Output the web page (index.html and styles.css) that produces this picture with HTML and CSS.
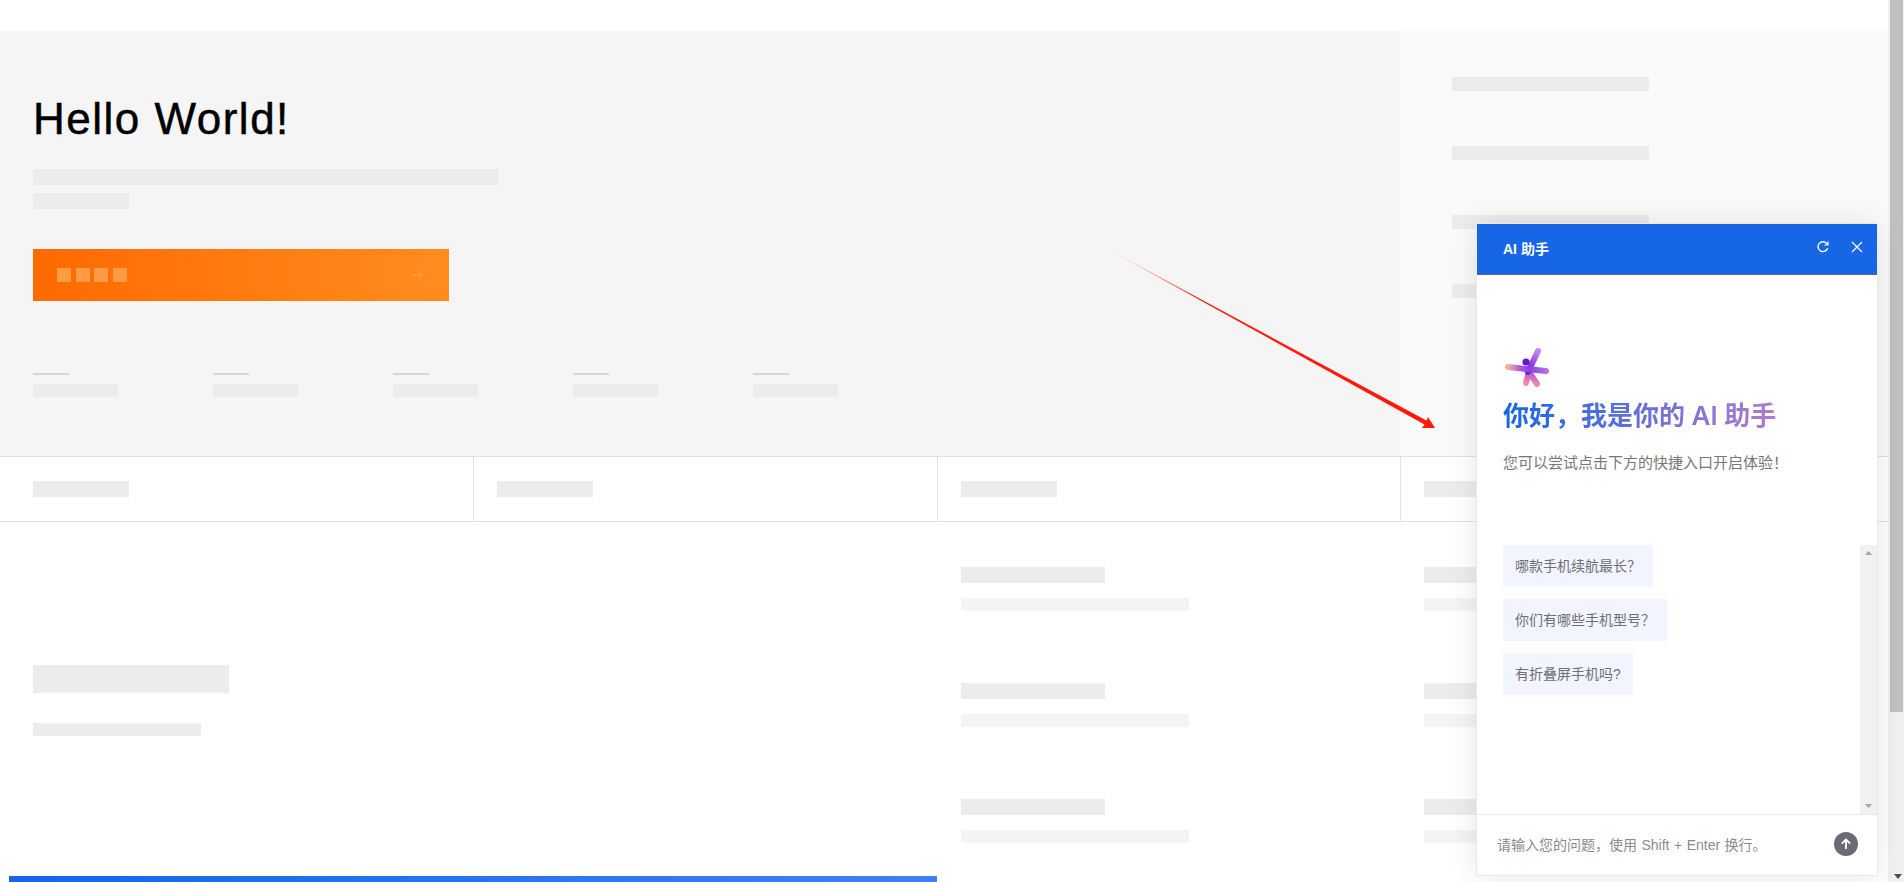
FILE: index.html
```html
<!DOCTYPE html>
<html lang="zh-CN">
<head>
<meta charset="utf-8">
<title>AI 助手</title>
<link rel="stylesheet" href="styles.css">
</head>
<body>
<div class="viewport">
  <main class="page">
    <section class="hero">
      <div class="hero-main">
        <h1 class="hello">Hello World!</h1>
        <div class="sk sk-lead"></div>
        <div class="sk sk-lead-short"></div>
        <div class="cta">
          <div class="cta-dots"><i></i><i></i><i></i><i></i></div>
          <svg class="cta-arrow" viewBox="0 0 12 10" width="12" height="10" fill="none" stroke="#ff9c45" stroke-width="1.3"><path d="M0.5 5H11M7 1l4 4-4 4"/></svg>
        </div>
        <div class="stats">
          <div class="stat"><div class="stat-tick"></div><div class="sk stat-val"></div></div>
          <div class="stat"><div class="stat-tick"></div><div class="sk stat-val"></div></div>
          <div class="stat"><div class="stat-tick"></div><div class="sk stat-val"></div></div>
          <div class="stat"><div class="stat-tick"></div><div class="sk stat-val"></div></div>
          <div class="stat"><div class="stat-tick"></div><div class="sk stat-val"></div></div>
        </div>
      </div>
      <div class="hero-side">
        <div class="sk side-bar"></div>
        <div class="sk side-bar"></div>
        <div class="sk side-bar"></div>
        <div class="sk side-bar"></div>
      </div>
    </section>
    <nav class="tabs">
      <div class="tab"><div class="sk tab-sk"></div></div>
      <div class="tab"><div class="sk tab-sk"></div></div>
      <div class="tab"><div class="sk tab-sk"></div></div>
      <div class="tab"><div class="sk tab-sk"></div></div>
    </nav>
    <section class="lower">
      <div class="feature">
        <div class="sk feature-title"></div>
        <div class="sk feature-sub"></div>
        <div class="feature-bar"></div>
      </div>
      <div class="list">
        <div class="item"><div class="sk item-a"></div><div class="item-b"></div></div>
        <div class="item"><div class="sk item-a"></div><div class="item-b"></div></div>
        <div class="item"><div class="sk item-a"></div><div class="item-b"></div></div>
      </div>
      <div class="list">
        <div class="item"><div class="sk item-a"></div><div class="item-b"></div></div>
        <div class="item"><div class="sk item-a"></div><div class="item-b"></div></div>
        <div class="item"><div class="sk item-a"></div><div class="item-b"></div></div>
      </div>
    </section>
  </main>
  <div class="page-scroll">
    <div class="page-thumb"></div>
    <div class="page-scroll-down"></div>
  </div>

  <svg class="pointer" width="340" height="190" viewBox="1110 248 340 190">
    <defs>
      <linearGradient id="fade" gradientUnits="userSpaceOnUse" x1="1113" y1="252" x2="1200" y2="299">
        <stop offset="0" stop-color="#ff1a0a" stop-opacity="0.3"/>
        <stop offset="1" stop-color="#ff1a0a"/>
      </linearGradient>
    </defs>
    <path fill="url(#fade)" d="M1113 252L1426.5 420.5L1428 417L1435 428L1422 428L1424.5 424.5Z"/>
  </svg>

  <aside class="chat">
    <header class="chat-head">
      <span class="chat-title">AI 助手</span>
      <div class="chat-actions">
        <svg class="ico-refresh" width="14" height="14" viewBox="0 0 14 14" fill="none" stroke="#fff" stroke-width="1.4"><path d="M11.6 8.2A4.9 4.9 0 1 1 10.4 3.2L11.8 4.6"/><path d="M12 1.4V5H8.4" stroke-width="1.2"/></svg>
        <svg class="ico-close" width="12" height="12" viewBox="0 0 12 12" fill="none" stroke="#fff" stroke-width="1.3"><path d="M1 1l10 10M11 1L1 11"/></svg>
      </div>
    </header>
    <div class="chat-body">
      <div class="intro">
        <svg class="logo" width="44" height="42" viewBox="0 0 44 42" fill="none" stroke-linecap="round" stroke-width="6">
          <defs>
            <linearGradient id="lg-h" gradientUnits="userSpaceOnUse" x1="3" y1="20" x2="42" y2="24">
              <stop offset="0" stop-color="#eeb99a"/>
              <stop offset="0.3" stop-color="#b05ad8"/>
              <stop offset="0.55" stop-color="#8a3fe0"/>
              <stop offset="1" stop-color="#b572e6"/>
            </linearGradient>
            <linearGradient id="lg-v" gradientUnits="userSpaceOnUse" x1="33" y1="3" x2="23" y2="24">
              <stop offset="0" stop-color="#c987f5"/>
              <stop offset="1" stop-color="#6a1fd6"/>
            </linearGradient>
            <linearGradient id="lg-l" gradientUnits="userSpaceOnUse" x1="23" y1="24" x2="21" y2="36">
              <stop offset="0" stop-color="#a855d8"/>
              <stop offset="1" stop-color="#fb86a8"/>
            </linearGradient>
          </defs>
          <path stroke="url(#lg-l)" d="M24 25L21 36"/>
          <path stroke="url(#lg-l)" d="M24 25L32 37"/>
          <path stroke="url(#lg-v)" d="M33 4L23 25"/>
          <path stroke="url(#lg-h)" d="M3 20L41 24"/>
          <circle cx="21" cy="15" r="3.6" fill="#6a14d0" stroke="none"/>
        </svg>
        <h2 class="greet"><span class="greet-text">你好，我是你的 AI 助手</span></h2>
        <p class="hint">您可以尝试点击下方的快捷入口开启体验！</p>
      </div>
      <div class="suggest">
        <div class="chips">
          <div class="chip">哪款手机续航最长？</div>
          <div class="chip">你们有哪些手机型号？</div>
          <div class="chip">有折叠屏手机吗?</div>
        </div>
        <div class="inner-scroll">
          <svg width="17" height="17" viewBox="0 0 17 17"><path d="M8.5 6L12 10H5Z" fill="#a6a6a6"/></svg>
          <svg width="17" height="17" viewBox="0 0 17 17"><path d="M8.5 11L5 7H12Z" fill="#a6a6a6"/></svg>
        </div>
      </div>
    </div>
    <footer class="composer">
      <span class="placeholder">请输入您的问题，使用 Shift + Enter 换行。</span>
      <span class="send">
        <svg width="12" height="12" viewBox="0 0 12 12" fill="none" stroke="#fff" stroke-width="1.8"><path d="M6 11V1.5M1.8 5.6L6 1.5l4.2 4.1"/></svg>
      </span>
    </footer>
  </aside>
</div>
</body>
</html>
```

FILE: styles.css
```css
* { box-sizing: border-box; }
html, body { margin: 0; height: 100%; overflow: hidden; background: #fff; }
body { font-family: "Liberation Sans", "Noto Sans CJK SC", sans-serif; }

.viewport { position: relative; display: flex; width: 1904px; height: 882px; overflow: hidden; }
.page { width: 1888px; flex: none; padding-top: 31px; }

.sk { background: #ececec; }

.hero { display: flex; height: 426px; background: #f5f5f5; border-bottom: 1px solid #e2e2e2; }
.hero-main { width: 1400px; padding: 0 33px; }
.hello { margin: 63px 0 0; height: 50px; font-size: 44px; line-height: 50px; font-weight: 400; letter-spacing: 1.5px; color: #000; -webkit-text-stroke: 0.5px #000; }
.sk-lead { width: 465px; height: 16px; margin-top: 25px; }
.sk-lead-short { width: 96px; height: 16px; margin-top: 8px; }
.cta { display: flex; align-items: center; justify-content: space-between; width: 416px; height: 52px; margin-top: 40px; padding: 0 24px; background: linear-gradient(90deg, #ff6a00, #ff8c1f); }
.cta-dots { display: flex; gap: 4.67px; }
.cta-dots i { display: block; width: 14px; height: 14px; background: #ff9a45; }
.cta-arrow { margin-right: 2px; }
.stats { display: flex; margin-top: 72px; }
.stat { width: 180px; }
.stat-tick { width: 36px; height: 2px; background: #d5d5dd; }
.stat-val { width: 85px; height: 13px; margin-top: 9px; }
.hero-side { flex: 1; padding: 46px 0 0 52px; background: #fafafa; display: flex; flex-direction: column; gap: 55px; }
.side-bar { width: 197px; height: 14px; }

.tabs { display: grid; grid-template-columns: 473px 464px 463px 1fr; height: 65px; border-bottom: 1px solid #e2e2e2; }
.tab { padding: 24px 0 0 23px; border-left: 1px solid #e2e2e2; }
.tab:first-child { padding-left: 33px; border-left: 0; }
.tab-sk { width: 96px; height: 16px; }

.lower { display: grid; grid-template-columns: 937px 463px 1fr; height: 360px; }
.feature { position: relative; padding: 143px 0 0 33px; }
.feature-title { width: 196px; height: 28px; }
.feature-sub { width: 168px; height: 13px; margin-top: 30px; }
.feature-bar { position: absolute; left: 9px; right: 0; bottom: 0; height: 6px; background: linear-gradient(90deg, #1666e6, #3b82f6); }
.list { padding: 45px 0 0 24px; display: flex; flex-direction: column; gap: 72px; }
.item-a { width: 144px; height: 16px; }
.item-b { width: 228px; height: 13px; margin-top: 15px; background: #f4f4f4; }

.page-scroll { position: relative; flex: 1; background: #f1f1f1; }
.page-thumb { position: absolute; left: 2px; right: 1px; top: 0; height: 712px; background: #c1c1c1; }
.page-scroll-down { position: absolute; left: 6px; bottom: 3px; border: 4px solid transparent; border-top: 5px solid #505050; border-bottom: 0; }

.pointer { position: absolute; left: 1110px; top: 248px; }

.chat { position: absolute; left: 1476px; top: 223px; width: 402px; height: 653px; display: flex; flex-direction: column; background: #fff; border: 1px solid #e9e9f0; box-shadow: 0 0 28px rgba(0, 0, 0, 0.1); }
.chat-head { display: flex; align-items: center; justify-content: space-between; flex: none; height: 51px; padding: 0 14px 2px 26px; background: #1666e6; border-bottom: 1px solid #5a6a85; }
.chat-title { color: #fff; font-size: 14px; font-weight: 700; }
.chat-actions { display: flex; align-items: center; gap: 21px; margin-bottom: 2px; }
.chat-body { flex: 1; display: flex; flex-direction: column; min-height: 0; }
.intro { padding: 72px 0 0 26px; height: 270px; }
.logo { display: block; margin-left: 2px; }
.greet { margin: 9px 0 0; font-family: Inter, "Noto Sans CJK SC", sans-serif; font-size: 26px; line-height: 36px; font-weight: 600; }
.greet-text { display: inline-block; background: linear-gradient(90deg, #1666e6, #b27bcc); -webkit-background-clip: text; background-clip: text; color: transparent; }
.hint { margin: 18px 0 0; font-size: 15px; line-height: 22px; color: #777; }
.suggest { flex: 1; display: flex; min-height: 0; }
.chips { flex: 1; padding-left: 26px; display: flex; flex-direction: column; align-items: flex-start; gap: 12px; }
.chip { height: 42px; padding: 0 12px; font-size: 14px; line-height: 42px; color: #6e6e78; background: #f2f4ff; }
.inner-scroll { width: 17px; background: #f1f1f1; display: flex; flex-direction: column; justify-content: space-between; }
.inner-scroll svg { display: block; }
.composer { display: flex; align-items: center; justify-content: space-between; flex: none; height: 61px; padding: 0 19px 3px 20px; border-top: 1px solid #e9e9e9; }
.placeholder { font-size: 14px; color: #8a8a94; word-spacing: 0.6px; }
.send { display: flex; align-items: center; justify-content: center; width: 24px; height: 24px; border-radius: 50%; background: #6b6b78; }
```
